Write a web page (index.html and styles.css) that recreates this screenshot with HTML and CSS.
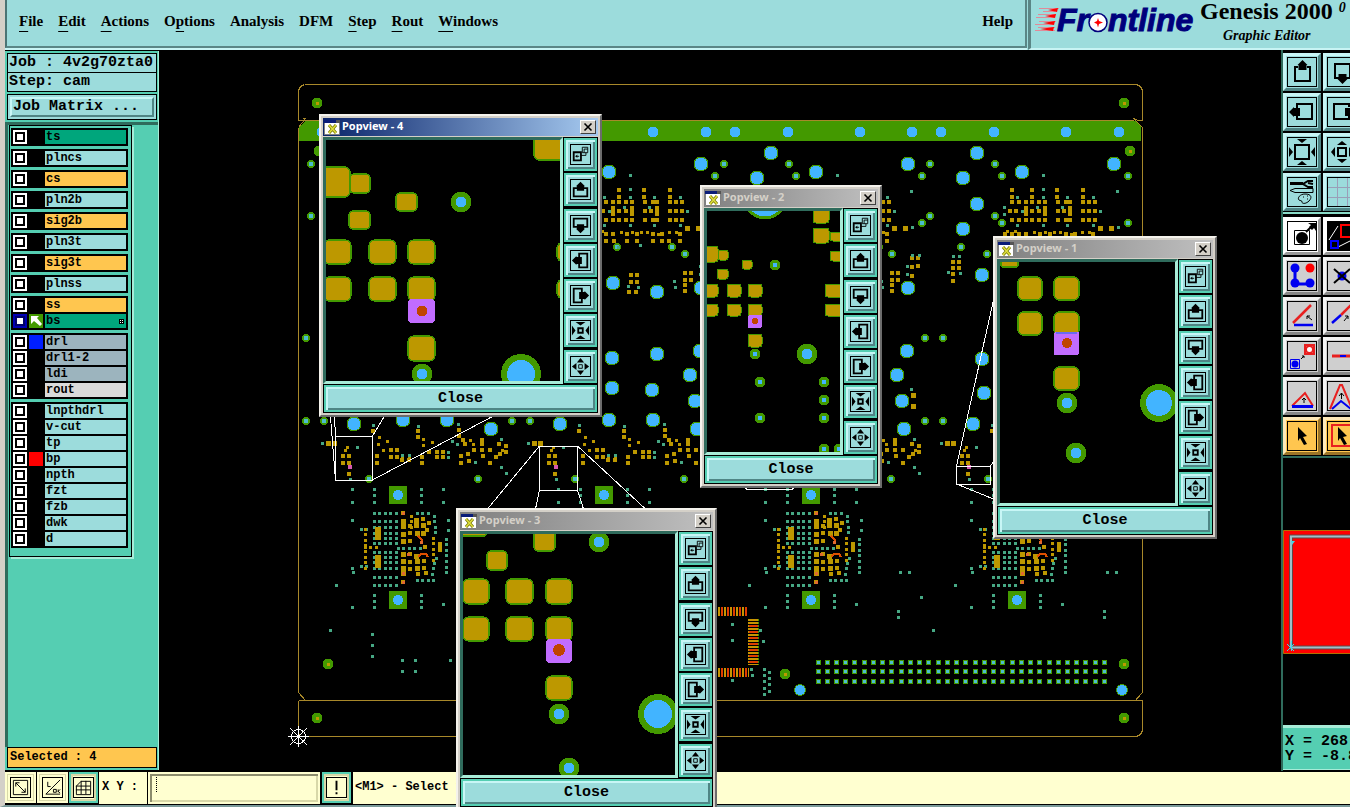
FILE: index.html
```
<!DOCTYPE html>
<html lang="en">
<head>
    <meta charset="UTF-8">
    <meta name="viewport" content="width=device-width, initial-scale=1.0">
    <title>Genesis 2000 - Graphic Editor</title>
    <link rel="stylesheet" href="styles.css">
</head>
<body>
    <!-- shared icons -->
    <svg class="defs" width="0" height="0" aria-hidden="true">
        <symbol id="i-pop" viewBox="0 0 21 21">
            <path class="ln2" d="M3 8h8v9h-8z"/><path class="ln" d="M12.5 2.5h6v6h-6zM14.5 4.5h4M14.500 4.500v4M11 11.500h5.500v-3M5 12.500h4"/><path d="M5 12.500l2-2v4z"/>
        </symbol>
        <symbol id="i-up" viewBox="0 0 21 21">
            <path class="ln2" d="M7 9h-4v9h15v-9h-4"/><path d="M10.500 2l5 5h-1v5h-8v-5h-1z"/>
        </symbol>
        <symbol id="i-down" viewBox="0 0 21 21">
            <path class="ln2" d="M7 12h-4v-9h15v9h-4"/><path d="M10.500 19l5-5h-1v-5h-8v5h-1z"/>
        </symbol>
        <symbol id="i-left" viewBox="0 0 21 21">
            <path class="ln2" d="M9 7v-4h9v15h-9v-4"/><path d="M1 10.500l5-5v1h6v8h-6v1z"/>
        </symbol>
        <symbol id="i-right" viewBox="0 0 21 21">
            <path class="ln2" d="M12 7v-4h-9v15h9v-4"/><path d="M20 10.500l-5-5v1h-6v8h6v1z"/>
        </symbol>
        <symbol id="i-in" viewBox="0 0 21 21">
            <path class="ln2" d="M8 8h5v5h-5z"/><path d="M5 1h11l-5.500 4zM5 20h11l-5.500-4zM1 5v11l4-5.500zM20 5v11l-4-5.500z"/>
        </symbol>
        <symbol id="i-out" viewBox="0 0 21 21">
            <path class="ln" d="M8.500 8.500h4v4h-4z"/><path d="M10.500 1l4 5h-8zM10.500 20l4-5h-8zM1 10.500l5-4v8zM20 10.500l-5-4v8z"/>
        </symbol>
        <symbol id="i-app" viewBox="0 0 16 16">
            <path fill="#fff" stroke="#808080" d="M.5 1.500h15v14h-15z"/><path fill="#0a1c78" d="M0 1h16v3h-16z"/><path fill="#555" d="M12 1h4v3h-4z"/>
            <path stroke="#777700" stroke-width="3" d="M5 6l7 8M12 6l-7 8"/><path stroke="#e0e040" stroke-width="1.500" d="M5 6l7 8M12 6l-7 8"/>
        </symbol>
        <symbol id="i-x" viewBox="0 0 10 10"><path stroke="#000" stroke-width="1.600" d="M1.500 1.500l7 7M8.500 1.500l-7 7"/></symbol>
    </svg>

    <div class="editor">
        <header class="topbar">
            <nav class="menu">
                <button><u>F</u>ile</button>
                <button><u>E</u>dit</button>
                <button><u>A</u>ctions</button>
                <button>O<u>p</u>tions</button>
                <button>Analysis</button>
                <button>DFM</button>
                <button><u>S</u>tep</button>
                <button><u>R</u>out</button>
                <button><u>W</u>indows</button>
                <button class="help">Help</button>
            </nav>
            <div class="brand">
                <svg class="logo" width="162" height="36" viewBox="1036 4 162 36">
                    <path class="speed" d="M1040 10.500h20M1044 13.500h12M1039 16.500h18M1037 19.500h18M1040 23.500h17M1036 26.500h18M1039 29.500h17M1036 32.500h20"/>
                    <path fill="#f00" d="M1049 12l10-2-1 4zM1046 18l11-2-1 4zM1044 25l12-2-1 4zM1041 31l14-2-1 4z"/>
                    <text class="word" x="1058" y="33">Fr</text>
                    <circle cx="1099" cy="24.500" r="9" fill="#fff" stroke="#00007c" stroke-width="1.500"/>
                    <path fill="#f00" d="M1099 20l1 3 4 1.500-4 1.500-1 3.500-1-3.500-3-1.500 3-1.500z"/>
                    <text class="word" x="1109" y="33">ntline</text>
                </svg>
                <div class="product">
                    <div class="name">Genesis 2000 <sup>0</sup></div>
                    <div class="sub">Graphic Editor</div>
                </div>
            </div>
        </header>

        <main class="work">
            <aside class="side">
                <div class="field">Job : 4v2g70zta0</div>
                <div class="field">Step: cam</div>
                <div class="matrix"><button>Job Matrix ...</button></div>
                <div class="layers-wrap">
                    <div class="layers">
                        <div class="group">
                            <label class="green"><input type="checkbox"><i></i><span>ts</span></label>
                        </div>
                        <div class="group">
                            <label><input type="checkbox"><i></i><span>plncs</span></label>
                        </div>
                        <div class="group">
                            <label class="orange"><input type="checkbox"><i></i><span>cs</span></label>
                        </div>
                        <div class="group">
                            <label><input type="checkbox"><i></i><span>pln2b</span></label>
                        </div>
                        <div class="group">
                            <label class="orange"><input type="checkbox"><i></i><span>sig2b</span></label>
                        </div>
                        <div class="group">
                            <label><input type="checkbox"><i></i><span>pln3t</span></label>
                        </div>
                        <div class="group">
                            <label class="orange"><input type="checkbox"><i></i><span>sig3t</span></label>
                        </div>
                        <div class="group">
                            <label><input type="checkbox"><i></i><span>plnss</span></label>
                        </div>
                        <div class="group">
                            <label class="orange"><input type="checkbox"><i></i><span>ss</span></label>
                            <label class="green work-layer"><input type="checkbox" checked><i><svg width="14" height="14" viewBox="0 0 14 14"><path fill="#fff" d="M2 2h8l-2 2 5 6-2 2-6-5-3 3z"/></svg></i><span>bs<svg class="snap" width="5" height="5" viewBox="0 0 5 5"><path fill="#000" d="M0 0h5v5h-5z"/><path fill="#fff" d="M1 1h1v1h-1zM3 1h1v1h-1zM1 3h1v1h-1zM3 3h1v1h-1z"/></svg></span></label>
                        </div>
                        <div class="group">
                            <label class="steel"><input type="checkbox"><i class="blue"></i><span>drl</span></label>
                            <label class="steel"><input type="checkbox"><i></i><span>drl1-2</span></label>
                            <label class="steel"><input type="checkbox"><i></i><span>ldi</span></label>
                            <label class="grey"><input type="checkbox"><i></i><span>rout</span></label>
                        </div>
                        <div class="group">
                            <label><input type="checkbox"><i></i><span>lnpthdrl</span></label>
                            <label><input type="checkbox"><i></i><span>v-cut</span></label>
                            <label><input type="checkbox"><i></i><span>tp</span></label>
                            <label><input type="checkbox"><i class="red"></i><span>bp</span></label>
                            <label><input type="checkbox"><i></i><span>npth</span></label>
                            <label><input type="checkbox"><i></i><span>fzt</span></label>
                            <label><input type="checkbox"><i></i><span>fzb</span></label>
                            <label><input type="checkbox"><i></i><span>dwk</span></label>
                            <label><input type="checkbox"><i></i><span>d</span></label>
                        </div>
                    </div>
                </div>
                <div class="selected">Selected : 4</div>
            </aside>

            <section class="canvas">
                <svg class="board" width="1122" height="720" viewBox="159 50 1122 720">
                    <defs>
                        <path id="big" d="M403 172h0M495 164h0M358 153h0M344 178h0M358 204h0M344 229h0M363 275h0M363 359h0M365 393h0M354 424h0M407 283h0M451 292h0M495 288h0M406 358h0M451 354h0M494 351h0M484 375h0M406 388h0M446 390h0M489 401h0M403 420h0M447 420h0M491 429h0"/>
                        <path id="via" d="M311 164h0M376 164h0M383 176h0M509 176h0M509 223h0M383 223h0M311 216h0M376 216h0M306 338h0M324 338h0M306 421h0M324 421h0M342 247h0M368 254h0M411 247h0M466 247h0M479 254h0M478 479h0M369 479h0"/>
                        <!-- one step-and-repeat unit -->
                        <g id="cell">
                            <use href="#big" class="ring" stroke-width="15"/>
                            <use href="#big" class="hole" stroke-width="13"/>
                            <use href="#via" class="ring" stroke-width="8"/>
                            <use href="#via" class="core" stroke-width="4"/>
                            <path class="pad" d="M393 190h0M413 190h0M438 190h0M464 190h0M393 197h0M413 197h0M438 197h0M464 197h0M393 202h0M400 202h0M407 202h0M413 202h0M420 202h0M426 202h0M439 202h0M447 202h0M451 202h0M464 202h0M470 202h0M476 202h0M391 211h0M397 211h0M407 211h0M413 211h0M420 211h0M426 211h0M439 211h0M445 211h0M451 211h0M464 211h0M470 211h0M476 211h0M393 220h0M400 220h0M407 220h0M413 220h0M420 220h0M426 220h0M439 220h0M447 220h0M451 220h0M464 220h0M470 220h0M476 220h0M407 208h0M426 208h0M451 208h0M407 214h0M426 214h0M451 214h0"/>
                            <path class="pad" d="M386 234h0M393 234h0M400 234h0M407 234h0M421 234h0M431 234h0M447 234h0M456 234h0M474 234h0M386 241h0M400 241h0M408 241h0M421 241h0M431 241h0M447 241h0M456 241h0M463 241h0M474 241h0"/>
                            <path class="dot gold" d="M415 232h0M426 232h0M435 232h0M441 232h0M452 234h0M463 232h0M470 232h0M388 231h0M396 231h0"/>
                            <path class="pad pad5" d="M481 228h0M492 228h0M500 395h0M500 406h0M328 443h0M334 443h0"/>
                            <path class="pad" d="M425 275h0M431 275h0M425 282h0M431 282h0M423 292h0M430 292h0M479 273h0M485 273h0M479 280h0M485 280h0M479 285h0M479 291h0M499 258h0M505 258h0M499 267h0M505 266h0M499 276h0M334 262h0M340 262h0M334 268h0M340 268h0M334 274h0M334 281h0"/>
                            <path class="dot teal" d="M424 175h0M424 189h0M498 191h0M398 197h0M424 197h0M448 197h0M474 197h0M385 207h0M385 214h0M418 207h0M443 207h0M481 211h0M403 211h0M398 225h0M424 225h0M448 225h0M474 225h0M499 227h0M434 245h0M412 247h0M422 286h0M432 287h0M468 281h0M469 287h0M499 255h0M494 266h0M494 274h0M506 255h0M334 256h0M340 256h0M329 272h0M341 273h0M498 389h0"/>
                            <path class="pad" d="M373 431h0M343 456h0M349 456h0M343 463h0M349 463h0M349 474h0M377 456h0M377 463h0M391 450h0M397 450h0M391 457h0M397 457h0M402 460h0M409 460h0M418 431h0M418 437h0M422 457h0M422 463h0M429 452h0M437 452h0M437 457h0M443 452h0M443 457h0M461 456h0M461 463h0M468 454h0M469 461h0M459 430h0M459 436h0M463 440h0M465 444h0M474 450h0M482 440h0M482 444h0M482 450h0M483 456h0M490 450h0M490 463h0M496 457h0M499 444h0M506 446h0M506 452h0M500 454h0"/>
                            <path class="dot gold" d="M347 447h0M345 450h0M379 437h0M387 441h0M378 444h0M383 450h0M423 439h0M432 442h0M423 445h0M470 440h0M473 444h0M402 458h0M409 458h0M502 450h0"/>
                            <path class="dot teal" d="M322 443h0M357 447h0M350 479h0M373 425h0M402 455h0M409 455h0M448 452h0M448 457h0M418 426h0M452 441h0M457 444h0M458 424h0M475 462h0M501 439h0M501 467h0M506 473h0M352 489h0M352 502h0M374 489h0M374 495h0M374 502h0M421 489h0M421 495h0M421 502h0M443 489h0M443 502h0M352 520h0M448 520h0M448 530h0M352 568h0M353 572h0M374 595h0M374 601h0M374 607h0M421 595h0M421 601h0M421 607h0M352 607h0M443 604h0M336 585h0"/>
                            <circle cx="350" cy="467" r="2.500" fill="#d45ab0"/>
                            <path class="copper" d="M389 486h18v18h-18zM389 591h18v18h-18z"/>
                            <circle class="blue" cx="398" cy="495" r="5"/>
                            <circle class="blue" cx="398" cy="600" r="5"/>
                            <!-- fine-pitch package -->
                            <path class="grid teal" d="M374 513h24M374 521h24M374 527h24M374 533h24M374 538h24M374 543h24M374 552h24M374 557h24M374 562h24M374 568h24M374 577h24M374 585h24"/>
                            <path class="grid teal" d="M398 548h24M446 539v36M361 529h9M361 566h9M417 513h13M417 580h20M434 516l2 20M436 558l-4 18"/>
                            <path class="grid gold" d="M365 529v40M433 538v24M365 547h13M411 516v14"/>
                            <path class="die" d="M375 527h6v13h-6zM375 555h6v13h-6zM438 542h4v10h-4z"/>
                            <path class="pad pad5" d="M403 521h0M403 526h0M403 534h0M403 541h0M403 554h0M403 561h0M403 568h0M403 573h0M416 520h0M416 525h0M417 533h0M416 556h0M417 561h0M417 568h0M423 525h0M423 533h0"/>
                            <path class="pad" d="M403 513h0M410 526h0M410 533h0M410 541h0M410 554h0M410 562h0M410 569h0M423 519h0M429 523h0M427 530h0M424 561h0M424 568h0M426 573h0M418 574h0M403 582h0M440 547h0M425 547h0"/>
                            <path class="trace" d="M418 536l5 5M418 557l3-3h5l2 3"/>
                            <path class="dot orange-dot" d="M403 513h0M403 573h0M421 542h0M403 582h0M408 554h0"/>
                        </g>
                    </defs>

                    <path class="profile" d="M304.500 84.500h832l4 2 2 4v30h-4l-5-2M298.500 120.500h6M298.500 120.500v-30l2-4 4-2M298.500 127.500v565l7 8M298.500 127.500l7-9h-3M1134.500 119.500l8 8v565l-8 9M298.500 700.500h844v30l-2 4-4 2h-836l-2-3v-33"/>
                    <path class="profile" d="M304 120.500h830"/>
                    <path class="copper" d="M299 127l6-6h831l5 6v14h-842z"/>
                    <path class="hole" stroke-width="11" d="M322 132h0M447 132h0M500 132h0M529 132h0M582 132h0M653 132h0M706 132h0M735 132h0M788 132h0M860 132h0M912 132h0M941 132h0M994 132h0M1066 132h0M1119 132h0"/>

                    <use href="#cell"/>
                    <use href="#cell" x="206"/>
                    <use href="#cell" x="413"/>
                    <use href="#cell" x="619"/>

                    <path class="ring" stroke-width="11" d="M317 103h0M1124 103h0M319 151h0M1130 151h0M328 664h0M317 718h0M1124 664h0M1124 718h0M785 674h0"/>
                    <path class="dot gold" d="M317 103h0M1124 103h0M1130 151h0M328 664h0M317 718h0M1124 664h0M1124 718h0M785 674h0"/>
                    <path class="ring" stroke-width="12" d="M800 690h0M1122 690h0"/>
                    <path class="hole" stroke-width="10" d="M800 690h0M1122 690h0"/>
                    <path class="dot teal" d="M330 630h0M372 634h0M372 645h0M372 656h0M402 660h0M415 660h0M402 671h0M415 671h0M450 660h0M900 572h0M909 572h0M921 597h0M898 611h0M898 617h0M933 630h0M1107 572h0M1116 572h0M1104 611h0M1104 617h0M732 624h0M732 640h0M760 630h0M763 641h0M751 669h0M752 675h0M732 680h0M764 669h0M764 675h0M764 681h0M764 688h0M764 694h0M769 672h0M769 678h0M769 684h0M769 691h0"/>

                    <!-- edge connector -->
                    <path class="finger" stroke-width="9" d="M718 611.500h29M718 672.500h31"/>
                    <path class="finger" stroke-width="10" d="M753 619v46"/>
                    <path class="finger-red" stroke-width="9" d="M721 611.500h26M721 672.500h26M753 625v38"/>
                    <path class="finger-green" d="M758.500 619v46"/>

                    <path class="pins-ring" d="M815.500 662.500h292M815.500 671.500h292M815.500 681.500h292"/>
                    <path class="pins-core" d="M816.500 662.500h291M816.500 671.500h291M816.500 681.500h291"/>

                    <!-- leader lines to the popviews -->
                    <path class="leader" d="M335.500 436.500h37v44h-37zM330.500 417l5 63M334.500 417l1 19M372.500 436l12-20M372.500 480l119-63M539.500 446.500h38v44h-38zM539.500 446l-52 63M539.500 490l-4 19M577.500 490l6 19M577.500 446l68 63M956.500 466.500h34v18h-34zM956.500 466l37-166M956.500 484l37 15M990.500 466l3-4M745 488l2 1.500h45l2-1.500"/>

                    <g class="origin">
                        <circle cx="298.500" cy="736.500" r="7"/>
                        <path d="M288 736.500h21M298.500 726v21M290 728l17 17M307 728l-17 17"/>
                    </g>
                </svg>
            </section>

            <aside class="tools">
                <div class="tool-grid">
                    <button aria-label="Pan up"><svg viewBox="0 0 28 28"><path class="ln2" d="M10 9h-3v14h15v-14h-3"/><path d="M14.500 2l5 5h-1v5h-8v-5h-1z"/></svg></button>
                    <button aria-label="Pan down"><svg viewBox="0 0 28 28"><path class="ln2" d="M11 20h-4v-14h15v14h-4"/><path d="M14.500 26l5-5h-1v-5h-8v5h-1z"/></svg></button>
                    <button aria-label="Pan left"><svg viewBox="0 0 28 28"><path class="ln2" d="M9 10v-4h15v15h-15v-4"/><path d="M1 14l5-5v1h6v8h-6v1z"/></svg></button>
                    <button aria-label="Pan right"><svg viewBox="0 0 28 28"><path class="ln2" d="M21 9v-3h-15v15h15v-3"/><path d="M28 14l-5-5v1h-6v8h6v1z"/></svg></button>
                    <button aria-label="Zoom home"><svg viewBox="0 0 28 28"><path class="ln2" d="M7 7h14v14h-14z"/><path d="M9 1h10l-5 4zM9 27h10l-5-4zM1 9v10l4-5zM27 9v10l-4-5z"/></svg></button>
                    <button aria-label="Zoom out"><svg viewBox="0 0 28 28"><path class="ln2" d="M10 10h8v8h-8z"/><path d="M14 3l5 4h-10zM14 25l5-4h-10zM3 14l4-5v10zM25 14l-4-5v10z"/></svg></button>
                    <button aria-label="Setup"><svg viewBox="0 0 28 28"><path d="M2 4h13v3h-13z"/><path class="ln2" d="M25 3h-5l-5 3 5 3h5M20 5l5 1"/><path class="ln" d="M2 12.500l5-2h18v4h-18zM17 16c-5 0-8 4-6 6 1 1 3 0 3 2s4 2 7-1 3-7-4-7zM15 19h1M19 18h1M20 21h-1"/></svg></button>
                    <button aria-label="Grid"><svg viewBox="0 0 28 28"><path stroke="#9a9fb8" d="M9.500 0v28M19.500 0v28M0 9.500h28M0 19.500h28"/></svg></button>
                </div>
                <div class="tool-grid edit">
                    <button class="white" aria-label="Add feature"><svg viewBox="0 0 28 28"><path class="ln" d="M6.500 8.500h15v14h-15z"/><circle cx="14" cy="16" r="6"/><path class="ln2" d="M18 10l5-5"/><path d="M20 1h8v8l-2-3-2 2-3-3 2-2z"/></svg></button>
                    <button class="white" aria-label="Resize"><svg viewBox="0 0 28 28"><path d="M0 0h28v28h-28z"/><path fill="none" stroke="#fff" d="M1 18l9-14M10 25l16-8"/><path fill="none" stroke="#f00" stroke-width="2" d="M13 3h13v12h-13z"/><path fill="none" stroke="#00f" stroke-width="2" d="M3 19h7v7h-7z"/></svg></button>
                    <button class="grey" aria-label="Change net"><svg viewBox="0 0 28 28"><path fill="none" stroke="#0000f0" stroke-width="3" d="M7 6v16h15"/><circle cx="7" cy="6" r="4.500" fill="#0000f0"/><circle cx="7" cy="21" r="4.500" fill="#0000f0"/><circle cx="22" cy="21" r="4.500" fill="#0000f0"/><circle cx="22" cy="6" r="4.500" fill="#f00"/></svg></button>
                    <button class="grey" aria-label="Delete"><svg viewBox="0 0 28 28"><circle cx="14" cy="14" r="4.500" fill="#0000f0"/><path class="ln2" d="M6 7l16 14M22 7l-16 14"/></svg></button>
                    <button class="grey" aria-label="Rotate"><svg viewBox="0 0 28 28"><path stroke="#e82020" stroke-width="2.500" d="M5 21l18-18"/><path stroke="#0000f0" stroke-width="2.500" d="M6 23h19"/><path class="ln" d="M24 18l-5-4M19 17v-3h3"/></svg></button>
                    <button class="grey" aria-label="Move"><svg viewBox="0 0 28 28"><path stroke="#e82020" stroke-width="2.500" d="M13 13l10-10"/><path stroke="#0000f0" stroke-width="2.500" d="M4 21l9-8"/><path class="ln" d="M16 19l4-5M17 14h3v3"/></svg></button>
                    <button class="grey" aria-label="Copy"><svg viewBox="0 0 28 28"><path fill="#fff" stroke="#e82020" stroke-width="2" d="M17 3h9v9h-9z"/><circle cx="21.500" cy="7.500" r="3.500" fill="#fff" stroke="#e82020" stroke-width="2"/><path fill="none" stroke="#0000f0" d="M2.500 17.500h9v9h-9z"/><circle cx="7" cy="22" r="3.500" fill="#0000f0"/><path class="ln" d="M13 17l3-3M14 14h2v2"/></svg></button>
                    <button class="grey" aria-label="Break line"><svg viewBox="0 0 28 28"><path stroke="#e82020" stroke-width="3" d="M4 14h22"/><path stroke="#0000f0" stroke-width="2" d="M12 14h6"/></svg></button>
                    <button class="grey" aria-label="Stretch"><svg viewBox="0 0 28 28"><path fill="none" stroke="#e82020" stroke-width="2" d="M4 24l13-13 8 13"/><path stroke="#0000f0" stroke-width="3" d="M4 24.500h21"/><path class="ln" d="M16 21v-5M14 18l2-2 2 2"/></svg></button>
                    <button class="grey" aria-label="Slide"><svg viewBox="0 0 28 28"><path fill="none" stroke="#e82020" stroke-width="2" d="M2 27l10-24h2l10 24"/><path fill="none" stroke="#0000f0" stroke-width="2" d="M4 27l9-8 10 8"/><path class="ln" d="M13.500 17v-6M11 14l2.500-3 2.500 3"/></svg></button>
                    <button class="orange" aria-label="Select"><svg viewBox="0 0 28 28"><path d="M10 5l9 9-4 1 4 7-3 1-4-7-2 3z"/></svg></button>
                    <button class="orange" aria-label="Select window"><svg viewBox="0 0 28 28"><path fill="none" stroke="#e82020" stroke-width="2" d="M4 3h22v21h-22z"/><path d="M10 5l9 9-4 1 4 7-3 1-4-7-2 3z"/></svg></button>
                </div>
                <div class="overview">
                    <svg width="80" height="124" viewBox="0 0 80 124">
                        <path fill="#f00" stroke="#b07000" d="M.5.500h90v123h-90z"/>
                        <path fill="none" stroke="#604848" stroke-width="4" d="M8 6.500h90v111h-90z"/>
                        <path fill="none" stroke="#9fc0c8" stroke-width="2" d="M8 6.500h90v111h-90z"/>
                        <path fill="none" stroke="#40d8e8" d="M4 114l7 7M11 114l-7 7M8.500 111v10"/>
                        <path fill="#40d8e8" d="M8 11h4l-3 4z"/>
                    </svg>
                </div>
                <div class="coords">X = 268<br>Y = -8.8</div>
            </aside>
        </main>

        <footer class="status">
            <button aria-label="Zoom area"><svg viewBox="0 0 20 20"><path class="ln" d="M2.500 2.500h15v15h-15zM5 5l10 10M5 9v-4h4M15 11v4h-4"/></svg></button>
            <button aria-label="Angle"><svg viewBox="0 0 20 20"><path class="ln" d="M18 2l-15 15h15M5 4v5h3M11 12h3v3h-3zM16 12v3M18 12l-2 2 2 2"/></svg></button>
            <button class="active" aria-label="Snap"><svg viewBox="0 0 20 20"><path class="ln" d="M7.500 3.500h10v14h-15v-9zM2 8.500h15M2 12.500h15M7.500 3v14M12.500 3v14"/></svg></button>
            <label for="xy">X Y :</label>
            <input id="xy" type="text">
            <button class="active" aria-label="Alerts"><svg viewBox="0 0 20 20"><path d="M9 3h2v10h-2zM9 15h2v2h-2z"/></svg></button>
            <div class="message">&lt;M1&gt; - Select feature</div>
        </footer>
    </div>

    <div class="popview pv4 front">
        <div class="title"><svg width="16" height="16"><use href="#i-app"/></svg><span>Popview - 4</span><button aria-label="Close window"><svg width="10" height="10"><use href="#i-x"/></svg></button></div>
        <div class="pane">
            <svg class="view" width="234" height="241" viewBox="326 140 234 241">
                <g class="p"><rect x="322" y="167" width="28" height="30" rx="5"/><rect x="350" y="174" width="20" height="19" rx="4"/><rect x="396" y="193" width="21" height="18" rx="4"/><rect x="349" y="211" width="21" height="18" rx="4"/><rect x="324" y="240" width="27" height="24" rx="6"/><rect x="369" y="240" width="27" height="24" rx="6"/><rect x="408" y="240" width="27" height="24" rx="6"/><rect x="324" y="277" width="27" height="24" rx="6"/><rect x="369" y="277" width="27" height="24" rx="6"/><rect x="408" y="277" width="27" height="24" rx="6"/><rect x="408" y="336" width="27" height="25" rx="6"/><rect x="534" y="130" width="34" height="30" rx="5"/><rect x="557" y="243" width="20" height="18" rx="5"/><rect x="557" y="280" width="20" height="18" rx="5"/></g>
                <rect class="sel" x="408" y="299" width="27" height="24" rx="4"/><circle class="drill" cx="422" cy="311" r="5.500"/>
                <g class="h"><circle cx="461" cy="202" r="8"/><circle cx="422" cy="374" r="8"/></g>
                <circle class="hb" cx="521" cy="374" r="17"/>
            </svg>
            <div class="pv-tools">
                <button aria-label="Pop"><svg><use href="#i-pop"/></svg></button>
                <button aria-label="Up"><svg><use href="#i-up"/></svg></button>
                <button aria-label="Down"><svg><use href="#i-down"/></svg></button>
                <button aria-label="Left"><svg><use href="#i-left"/></svg></button>
                <button aria-label="Right"><svg><use href="#i-right"/></svg></button>
                <button aria-label="Zoom in"><svg><use href="#i-in"/></svg></button>
                <button aria-label="Zoom out"><svg><use href="#i-out"/></svg></button>
            </div>
        </div>
        <button class="close">Close</button>
    </div>

    <div class="popview pv2">
        <div class="title"><svg width="16" height="16"><use href="#i-app"/></svg><span>Popview - 2</span><button aria-label="Close window"><svg width="10" height="10"><use href="#i-x"/></svg></button></div>
        <div class="pane">
            <svg class="view" width="133" height="241" viewBox="707 211 133 241">
                <g class="p small"><rect x="813" y="205" width="16" height="18" rx="3"/><rect x="813" y="228" width="16" height="15" rx="3"/><rect x="830" y="232" width="14" height="9" rx="3"/><rect x="830" y="251" width="14" height="10" rx="3"/><rect x="704" y="246" width="14" height="16" rx="3"/><rect x="718" y="250" width="10" height="10" rx="2"/><rect x="742" y="260" width="10" height="9" rx="2"/><rect x="717" y="269" width="11" height="10" rx="2"/><rect x="704" y="284" width="14" height="13" rx="3"/><rect x="727" y="284" width="14" height="13" rx="3"/><rect x="748" y="284" width="14" height="13" rx="3"/><rect x="825" y="284" width="18" height="13" rx="3"/><rect x="704" y="304" width="14" height="12" rx="3"/><rect x="727" y="304" width="14" height="12" rx="3"/><rect x="748" y="304" width="14" height="12" rx="3"/><rect x="825" y="304" width="18" height="12" rx="3"/><rect x="748" y="334" width="14" height="13" rx="3"/></g>
                <rect class="sel" x="748" y="315" width="14" height="13" rx="2"/><circle class="drill" cx="755" cy="321" r="3"/>
                <g class="h small"><circle cx="775" cy="265" r="4"/><circle cx="755" cy="354" r="4"/><circle cx="760" cy="382" r="4"/><circle cx="824" cy="382" r="4"/><circle cx="824" cy="400" r="4"/><circle cx="760" cy="418" r="4"/><circle cx="824" cy="418" r="4"/><circle cx="824" cy="449" r="4"/><circle cx="839" cy="449" r="4"/></g>
                <circle class="h" cx="807" cy="354" r="8"/><circle class="h small" cx="765" cy="198" r="20"/>
            </svg>
            <div class="pv-tools">
                <button aria-label="Pop"><svg><use href="#i-pop"/></svg></button>
                <button aria-label="Up"><svg><use href="#i-up"/></svg></button>
                <button aria-label="Down"><svg><use href="#i-down"/></svg></button>
                <button aria-label="Left"><svg><use href="#i-left"/></svg></button>
                <button aria-label="Right"><svg><use href="#i-right"/></svg></button>
                <button aria-label="Zoom in"><svg><use href="#i-in"/></svg></button>
                <button aria-label="Zoom out"><svg><use href="#i-out"/></svg></button>
            </div>
        </div>
        <button class="close">Close</button>
    </div>

    <div class="popview pv1">
        <div class="title"><svg width="16" height="16"><use href="#i-app"/></svg><span>Popview - 1</span><button aria-label="Close window"><svg width="10" height="10"><use href="#i-x"/></svg></button></div>
        <div class="pane">
            <svg class="view" width="175" height="241" viewBox="1000 262 175 241">
                <g class="p"><rect x="1001" y="255" width="17" height="12" rx="2"/><rect x="1018" y="277" width="24" height="23" rx="5"/><rect x="1054" y="277" width="25" height="23" rx="5"/><rect x="1018" y="312" width="24" height="23" rx="5"/><rect x="1054" y="312" width="25" height="23" rx="5"/><rect x="1054" y="367" width="25" height="23" rx="5"/></g>
                <rect class="sel" x="1054" y="332" width="25" height="23" rx="2"/><path fill="#6a6af0" d="M1056 332h21v2h-21z"/><circle class="drill" cx="1067" cy="343" r="5"/>
                <g class="h"><circle cx="1067" cy="403" r="8"/><circle cx="1076" cy="453" r="8"/></g>
                <circle class="hb" cx="1159" cy="403" r="16"/>
            </svg>
            <div class="pv-tools">
                <button aria-label="Pop"><svg><use href="#i-pop"/></svg></button>
                <button aria-label="Up"><svg><use href="#i-up"/></svg></button>
                <button aria-label="Down"><svg><use href="#i-down"/></svg></button>
                <button aria-label="Left"><svg><use href="#i-left"/></svg></button>
                <button aria-label="Right"><svg><use href="#i-right"/></svg></button>
                <button aria-label="Zoom in"><svg><use href="#i-in"/></svg></button>
                <button aria-label="Zoom out"><svg><use href="#i-out"/></svg></button>
            </div>
        </div>
        <button class="close">Close</button>
    </div>

    <div class="popview pv3">
        <div class="title"><svg width="16" height="16"><use href="#i-app"/></svg><span>Popview - 3</span><button aria-label="Close window"><svg width="10" height="10"><use href="#i-x"/></svg></button></div>
        <div class="pane">
            <svg class="view" width="212" height="241" viewBox="463 534 212 241">
                <g class="p"><rect x="460" y="520" width="26" height="16" rx="2"/><rect x="534" y="530" width="21" height="21" rx="4"/><rect x="487" y="551" width="20" height="19" rx="4"/><rect x="463" y="579" width="26" height="25" rx="6"/><rect x="506" y="579" width="27" height="25" rx="6"/><rect x="546" y="579" width="26" height="25" rx="6"/><rect x="463" y="617" width="26" height="24" rx="6"/><rect x="506" y="617" width="27" height="24" rx="6"/><rect x="546" y="617" width="26" height="24" rx="6"/><rect x="546" y="676" width="26" height="24" rx="6"/></g>
                <rect class="sel" x="546" y="639" width="26" height="24" rx="4"/><circle class="drill" cx="559" cy="650" r="6"/>
                <g class="h"><circle cx="599" cy="542" r="8"/><circle cx="559" cy="714" r="8"/><circle cx="569" cy="768" r="8"/></g>
                <circle class="hb" cx="658" cy="714" r="17"/>
            </svg>
            <div class="pv-tools">
                <button aria-label="Pop"><svg><use href="#i-pop"/></svg></button>
                <button aria-label="Up"><svg><use href="#i-up"/></svg></button>
                <button aria-label="Down"><svg><use href="#i-down"/></svg></button>
                <button aria-label="Left"><svg><use href="#i-left"/></svg></button>
                <button aria-label="Right"><svg><use href="#i-right"/></svg></button>
                <button aria-label="Zoom in"><svg><use href="#i-in"/></svg></button>
                <button aria-label="Zoom out"><svg><use href="#i-out"/></svg></button>
            </div>
        </div>
        <button class="close">Close</button>
    </div>
</body>
</html>
```
FILE: styles.css
```
* {
    box-sizing: border-box;
}
body {
    margin: 0;
    height: 100vh;
    overflow: hidden;
    position: relative;
    background: #000;
    color: #000;
    font-family: "Liberation Mono", monospace;
}
button {
    margin: 0;
    padding: 0;
    border: 0;
    color: #000;
    font: inherit;
}
svg {
    display: block;
}
.defs {
    position: absolute;
}
.ln, .ln2 {
    fill: none;
    stroke: #000;
}
.ln2 {
    stroke-width: 2;
}

.editor {
    height: 100vh;
    display: flex;
    flex-direction: column;
    border-left: 5px solid #d4d0c8;
    border-bottom: 2px solid #7a9a9a;
}

/* menu bar */
.topbar {
    display: flex;
    height: 50px;
    flex: none;
    background: #9cdcdc;
}
.menu {
    flex: 1;
    display: flex;
    align-items: center;
    gap: 15px;
    padding: 0 12px 4px;
    border: solid #5a8686;
    border-width: 0 2px 2px;
    border-left-color: #4a7474;
    box-shadow: 0 2px 0 #c8f4f4;
    margin-bottom: 2px;
}
.menu button {
    background: none;
    font: bold 15px "Liberation Serif", serif;
}
.menu u {
    text-underline-offset: 5px;
}
.menu .help {
    margin-left: auto;
}
.brand {
    flex: 0 0 322px;
    display: flex;
    overflow: hidden;
    padding-left: 4px;
    margin-left: 1px;
    border-left: 3px solid #5a8686;
    border-bottom: 2px solid #c8f4f4;
    white-space: nowrap;
}
.logo {
    flex: none;
    margin: 2px 3px 0 0;
}
.word {
    font: italic bold 32px "Liberation Sans", sans-serif;
    fill: #00007c;
    stroke: #00007c;
}
.speed {
    stroke: #e08a98;
    stroke-width: 1;
}
.product {
    font-family: "Liberation Serif", serif;
    font-weight: bold;
}
.name {
    font-size: 24px;
    line-height: 22px;
}
.name sup {
    font-size: 14px;
    line-height: 0;
    font-style: italic;
    vertical-align: 7px;
}
.sub {
    padding: 6px 0 0 23px;
    font-size: 14px;
    line-height: 16px;
    font-style: italic;
}

.work {
    flex: 1;
    display: flex;
    min-height: 0;
}

/* layer list */
.side {
    flex: 0 0 154px;
    display: flex;
    flex-direction: column;
    padding: 2px 1px 0 2px;
    margin: 1px 0 1px;
    background: #55ceb2;
    border-right: 1px solid #a8ecd8;
}
.field {
    height: 20px;
    margin-bottom: -1px;
    padding-left: 1px;
    border: 1px solid #000;
    background: #9cdcdc;
    font-size: 15px;
    font-weight: bold;
    line-height: 18px;
    white-space: nowrap;
}
.matrix {
    margin-top: 3px;
    padding: 2px;
    border: 1px solid #000;
    background: #9cdcdc;
}
.matrix button {
    display: block;
    width: 100%;
    height: 20px;
    padding-left: 1px;
    border: 2px solid;
    border-color: #c8f6f6 #4f8585 #4f8585 #c8f6f6;
    background: #9cdcdc;
    font-size: 15px;
    font-weight: bold;
    line-height: 16px;
    text-align: left;
}
.layers-wrap {
    flex: 1;
    margin: 2px -1px 0 -2px;
    border-top: 3px solid #2f6b5c;
    border-left: 3px solid #2f6b5c;
}
.layers {
    width: 123px;
    padding: 2px 1px 8px;
    border: 1px solid #000;
    box-shadow: 2px 2px 0 #a8ecd8;
    display: flex;
    flex-direction: column;
    gap: 3px;
    margin-left: 1px;
}
.group {
    display: grid;
    gap: 2px;
    padding: 2px;
    width: 117px;
    background: #000;
}
.group label {
    display: grid;
    grid-template-columns: 14px 14px 1fr;
    gap: 2px;
    height: 14px;
    font-weight: bold;
    font-size: 12px;
    line-height: 14px;
}
.group input {
    appearance: none;
    margin: 0;
    width: 14px;
    height: 14px;
    border: 2px solid #fff;
    background: #fff;
    box-shadow: inset 0 0 0 2px #000;
}
.group input:checked {
    border-color: #0000b4;
    box-shadow: inset 0 0 0 2px #00006a;
}
.group span {
    display: flex;
    align-items: center;
    justify-content: space-between;
    padding-left: 1px;
    background: #9cdcdc;
}
.group .snap {
    margin-right: 2px;
}
.green span {
    background: #00a67c;
}
.orange span {
    background: #ffc64f;
}
.steel span {
    background: #9cb4be;
}
.grey span {
    background: #dadada;
}
.group .blue {
    background: #001eff;
}
.group .red {
    background: #f00;
}
.work-layer i {
    background: #439900;
}
.selected {
    height: 21px;
    margin-bottom: 2px;
    padding-left: 2px;
    border: 1px solid #000;
    background: #ffc64f;
    font-weight: bold;
    font-size: 12px;
    line-height: 19px;
}

/* board */
.canvas {
    flex: 1;
    min-width: 0;
    overflow: hidden;
}
.board, .view {
    shape-rendering: crispEdges;
}
.ring, .hole {
    fill: none;
    stroke-linecap: round;
}
.ring {
    stroke: #439900;
}
.hole {
    stroke: #42b4ff;
}
.core {
    fill: none;
    stroke: #4cbcd0;
    stroke-linecap: square;
}
.pad {
    fill: none;
    stroke: #bd9800;
    stroke-width: 4;
    stroke-linecap: square;
}
.pad5 {
    stroke-width: 5;
}
.dot, .grid {
    fill: none;
    stroke-width: 3;
    stroke-linecap: square;
}
.grid {
    stroke-dasharray: 0 5.6;
}
.gold {
    stroke: #bd9800;
}
.teal {
    stroke: #46a884;
}
.orange-dot {
    stroke: #e06a30;
}
.die {
    fill: #bd9800;
}
.copper {
    fill: #439900;
}
.board .blue {
    fill: #42b4ff;
}
.trace {
    fill: none;
    stroke: #e05000;
    stroke-width: 2;
}
.profile {
    fill: none;
    stroke: #a8882a;
}
.finger {
    stroke: #c89400;
    stroke-dasharray: 2 1;
}
.finger-red {
    stroke: #e03c00;
    stroke-dasharray: 2 4;
}
.finger-green {
    stroke: #439900;
    stroke-dasharray: 2 1;
}
.pins-ring {
    stroke: #439900;
    stroke-width: 5;
    stroke-dasharray: 5 4.240;
}
.pins-core {
    stroke: #4cbcd0;
    stroke-width: 3;
    stroke-dasharray: 3 6.240;
}
.leader, .origin {
    fill: none;
    stroke: #fff;
}

/* tool palette */
.tools {
    flex: 0 0 69px;
    display: flex;
    flex-direction: column;
    overflow: hidden;
    padding-top: 3px;
    border-left: 2px solid #2f6b5c;
}
.tool-grid {
    display: grid;
    grid-template-columns: 38px 38px;
    gap: 2px;
    padding-bottom: 1px;
    border-bottom: 2px solid #8adcc8;
}
.tool-grid.edit {
    margin-top: 3px;
    border-color: #2f6b5c;
}
.tool-grid button {
    height: 38px;
    padding: 1px;
    border: 3px solid;
    border-color: #c8f6f6 #4f8585 #4f8585 #c8f6f6;
    background: #9cdcdc;
}
.tool-grid svg {
    width: 30px;
    height: 30px;
    border: 1px solid #000;
}
.tool-grid .white {
    background: #fff;
    border-color: #fff #999 #999 #fff;
}
.tool-grid .grey {
    background: #cfcfcf;
    border-color: #f4f4f4 #888 #888 #f4f4f4;
}
.tool-grid .orange {
    background: #ffc64f;
    border-color: #ffe9b8 #9a7428 #9a7428 #ffe9b8;
}
.overview {
    flex: 1;
    display: flex;
    align-items: center;
}
.overview svg {
    flex: none;
}
.coords {
    height: 45px;
    margin-bottom: 1px;
    padding: 6px 0 0 2px;
    border-top: 3px solid #a8ecd8;
    border-bottom: 1px solid #a8ecd8;
    background: #55ceb2;
    font-size: 15px;
    font-weight: bold;
    line-height: 15px;
    white-space: nowrap;
}

/* status line */
.status {
    flex: none;
    display: flex;
    height: 34px;
    padding: 1px 0;
    background: #000;
    font-weight: bold;
    font-size: 12px;
    line-height: 30px;
}
.status button {
    flex: none;
    width: 31px;
    height: 31px;
    margin-right: 1px;
    padding: 3px;
    border: 2px solid #ffffd0;
    background: #ffffd0;
    box-shadow: inset 0 0 0 1px #d8d8a8;
}
.status button.active {
    width: 29px;
    padding: 2px;
    border-color: #55ceb2;
    box-shadow: inset 0 0 0 2px #d8d8a8;
}
.status svg {
    width: 21px;
    height: 21px;
    border: 1px solid #000;
}
.status label {
    width: 48px;
    padding-left: 3px;
    background: #ffffd0;
}
.status input {
    width: 172px;
    margin: 0 2px 0 1px;
    padding: 0 4px;
    border: 2px solid #ffffd0;
    box-shadow: inset 2px 2px 0 #8c8c6c, inset -2px -2px 0 #d8d8a8;
    /* dotted caret of the idle field */
    background: repeating-linear-gradient(#000 0 1px, #ffffd0 1px 2px) 6px 3px / 1px 16px no-repeat #ffffd0;
    font: inherit;
}
.message {
    flex: 1;
    margin-left: 1px;
    padding-left: 2px;
    background: #ffffd0;
    white-space: nowrap;
}

/* popview windows */
.popview {
    position: absolute;
    padding: 2px;
    border: 2px solid;
    border-color: #f4f2ec #6c6c6c #6c6c6c #f4f2ec;
    background: #d4d0c8;
}
.pv4 {
    left: 319px;
    top: 114px;
}
.pv2 {
    left: 700px;
    top: 185px;
}
.pv1 {
    left: 993px;
    top: 236px;
}
.pv3 {
    left: 456px;
    top: 508px;
}
.title {
    display: flex;
    align-items: center;
    gap: 2px;
    height: 18px;
    margin-bottom: 1px;
    padding: 0 2px 0 1px;
    background: linear-gradient(90deg, #808080, #c0c0c0);
    color: #d4d0c8;
    font: bold 11px/16px "Noto Sans", sans-serif;
}
.front .title {
    background: linear-gradient(90deg, #0a246a, #a6caf0);
    color: #fff;
}
.title span {
    flex: 1;
    height: 18px;
}
.title button {
    display: grid;
    place-items: center;
    width: 16px;
    height: 14px;
    border: 1px solid;
    border-color: #fff #404040 #404040 #fff;
    background: #d4d0c8;
}
.pane {
    display: flex;
    background: #000;
}
.view {
    box-sizing: content-box;
    border: 3px solid;
    border-color: #2f6b5c #a8ecd8 #a8ecd8 #2f6b5c;
    background: #000;
}
.p {
    fill: #bd9800;
    stroke: #439900;
    stroke-width: 1.500;
}
.p.small {
    stroke-width: 1;
}
.sel {
    fill: #c16cff;
}
.drill {
    fill: #c04400;
}
.h, .hb {
    fill: #42b4ff;
    stroke: #439900;
    stroke-width: 5;
}
.h.small {
    stroke-width: 3;
}
.hb {
    stroke-width: 6;
}
.pv-tools {
    display: grid;
    gap: 2px;
    padding: 1px;
}
.pv-tools button {
    width: 33px;
    height: 33px;
    padding: 2px;
    border: 2px solid #55ceb2;
    background: #9cdcdc;
    box-shadow: inset 2px 2px 0 #c8f6f6, inset -2px -2px 0 #4f8585;
}
.pv-tools svg {
    width: 21px;
    height: 21px;
    margin: 2px;
    border: 1px solid #000;
}
.popview .close {
    display: block;
    width: 100%;
    height: 29px;
    border: 1px solid #000;
    background: #9cdcdc;
    box-shadow: inset 0 0 0 2px #55ceb2, inset 4px 4px 0 #c8f6f6, inset -4px -4px 0 #4f8585;
    font-size: 15px;
    font-weight: bold;
}
```
